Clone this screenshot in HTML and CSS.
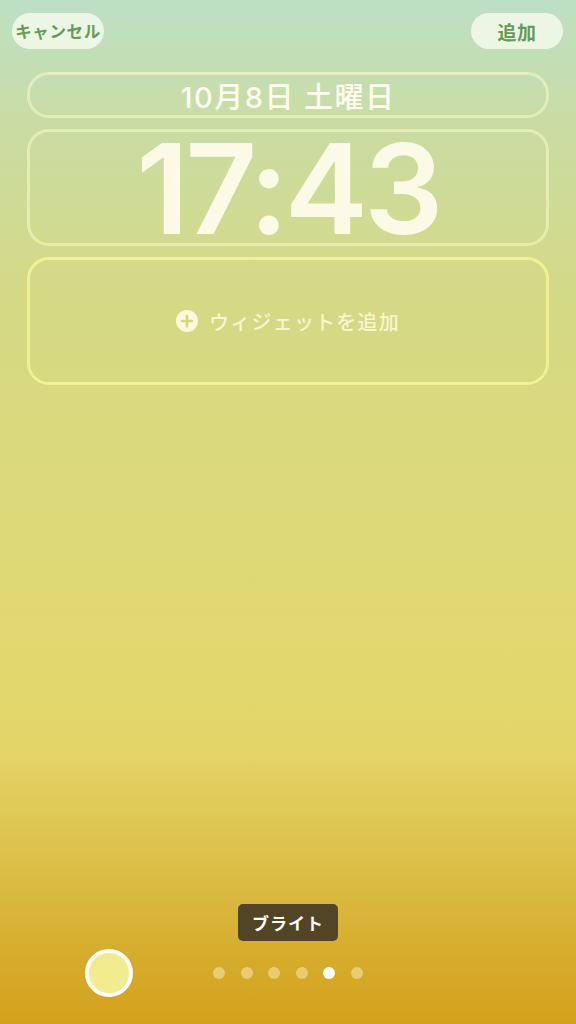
FILE: index.html
```html
<!DOCTYPE html>
<html lang="ja">

<head>
  <meta charset="utf-8">
  <title>ロック画面</title>
  <link rel="stylesheet" href="styles.css">
</head>

<body>
  <div class="screen">
    <div class="top-bar">
      <button class="pill pill-cancel">キャンセル</button>
      <button class="pill pill-add">追加</button>
    </div>

    <div class="slot slot-date">10月8日 土曜日</div>
    <div class="slot slot-time">17:43</div>
    <div class="slot slot-widget">
      <svg class="plus-icon" width="22" height="22" viewBox="0 0 22 22">
        <circle cx="11" cy="11" r="11" fill="#fbf8dc" />
        <path d="M11 6v10M6 11h10" stroke="#d8d67c" stroke-width="2.6" stroke-linecap="round" />
      </svg>
      <span>ウィジェットを追加</span>
    </div>

    <div class="bottom">
      <div class="tooltip">ブライト</div>
      <div class="bottom-row">
        <div class="color-swatch"></div>
        <div class="dots">
          <span class="dot"></span>
          <span class="dot"></span>
          <span class="dot"></span>
          <span class="dot"></span>
          <span class="dot active"></span>
          <span class="dot"></span>
        </div>
      </div>
    </div>
  </div>
</body>

</html>
```

FILE: styles.css
```css
/* Reset */
html,
body {
  margin: 0;
  padding: 0;
}

body {
  font-family: Inter, "Noto Sans CJK JP", sans-serif;
}

/* Full screen with the wallpaper gradient */
.screen {
  height: 1024px;
  display: flex;
  flex-direction: column;
  background: linear-gradient(to bottom,
      #bde0c5 0px,
      #cadca2 130px,
      #d5d985 300px,
      #dcd97a 500px,
      #e2d76c 700px,
      #e4d468 750px,
      #ddc24c 850px,
      #d6ad2e 950px,
      #d4a11c 1024px);
}

/* Top buttons */
.top-bar {
  display: flex;
  justify-content: space-between;
  padding: 13px 13px 0 12px;
}

.pill {
  height: 36px;
  width: 92px;
  border: none;
  border-radius: 18px;
  background-color: rgba(250, 252, 240, 0.78);
  color: #649c56;
  font-family: "Noto Sans CJK JP", sans-serif;
  font-weight: 700;
  padding: 0;
}

.pill-cancel {
  font-size: 16.5px;
  letter-spacing: 0.6px;
}

.pill-add {
  font-size: 19px;
  letter-spacing: 0.5px;
}

/* Outlined slots on the lock screen */
.slot {
  box-sizing: border-box;
  margin: 0 27px;
  border: 3px solid rgba(250, 250, 200, 0.55);
  border-radius: 22px;
  color: #fbfae6;
  display: flex;
  align-items: center;
  justify-content: center;
}

.slot-date {
  margin-top: 23px;
  height: 46px;
  font-size: 29px;
  font-weight: 500;
  letter-spacing: 1.5px;
  color: #fdfcee;
}

.slot-time {
  margin-top: 11px;
  height: 117px;
  font-size: 125px;
  font-weight: 600;
  letter-spacing: -4px;
  line-height: 1;
  padding-top: 2px;
}

.slot-widget {
  margin-top: 11px;
  height: 128px;
  gap: 11px;
  border-color: rgba(246, 244, 150, 0.85);
  font-family: "Noto Sans CJK JP", sans-serif;
  font-size: 20px;
  font-weight: 500;
  color: #f8f5d2;
  letter-spacing: 1.2px;
}

.plus-icon {
  display: block;
}

/* Bottom area */
.bottom {
  margin-top: auto;
  padding-bottom: 27px;
  display: flex;
  flex-direction: column;
  align-items: center;
}

.tooltip {
  height: 37px;
  padding: 0 14px;
  box-sizing: border-box;
  display: flex;
  align-items: center;
  background-color: #524526;
  color: #ffffff;
  border-radius: 5px;
  font-family: "Noto Sans CJK JP", sans-serif;
  font-size: 17px;
  font-weight: 700;
  letter-spacing: 1px;
  margin-bottom: 8px;
}

.bottom-row {
  width: 100%;
  display: grid;
  grid-template-columns: 1fr auto 1fr;
  align-items: center;
}

.color-swatch {
  justify-self: start;
  margin-left: 85px;
  width: 48px;
  height: 48px;
  box-sizing: border-box;
  border-radius: 50%;
  border: 4px solid #ffffff;
  background-color: #f3ec8e;
}

.dots {
  display: flex;
  gap: 15.6px;
  padding: 0 1px;
}

.dot {
  width: 12px;
  height: 12px;
  border-radius: 50%;
  background-color: rgba(250, 240, 190, 0.5);
}

.dot.active {
  background-color: #ffffff;
}
```
